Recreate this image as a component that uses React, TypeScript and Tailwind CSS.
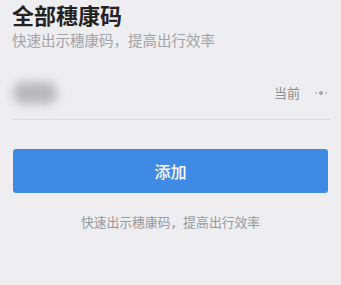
import React from "react";

export default function App() {
  return (
    <div
      className="w-[341px] h-[285px] overflow-hidden bg-[#eeedf0]"
      style={{ fontFamily: '"Noto Sans CJK SC", "Noto Sans", sans-serif' }}
    >
      <div className="px-3">
        <div className="text-[22px] leading-[28px] font-bold text-[#222222]">全部穗康码</div>
        <div className="mt-[3px] text-[14.5px] leading-[18px] text-[#a3a3a6]">快速出示穗康码，提高出行效率</div>
      </div>
      <div className="mx-3 mt-[17px] h-[54px] flex items-center border-b border-[#dcdbde]">
        <div className="w-[44px] h-[22px] rounded-[10px] bg-[#b9b9bc] blur-[5px] ml-[1px]" />
        <div className="ml-auto text-[13px] text-[#8c8c8f]">当前</div>
        <div className="ml-[15px] mr-[2px] flex items-center gap-[2px]">
          <span className="w-[2px] h-[2px] rounded-full bg-[#b5b5b8]" />
          <span className="w-[4px] h-[4px] rounded-full bg-[#a8a8ab]" />
          <span className="w-[2px] h-[2px] rounded-full bg-[#b5b5b8]" />
        </div>
      </div>
      <div className="mx-[13px] mt-[29px] h-[44px] rounded-[3px] bg-[#3e8ae5] flex items-center justify-center text-white text-[16px] font-medium">
        添加
      </div>
      <div className="mt-[19px] text-center text-[12.8px] text-[#9a9a9d]">快速出示穗康码，提高出行效率</div>
    </div>
  );
}
